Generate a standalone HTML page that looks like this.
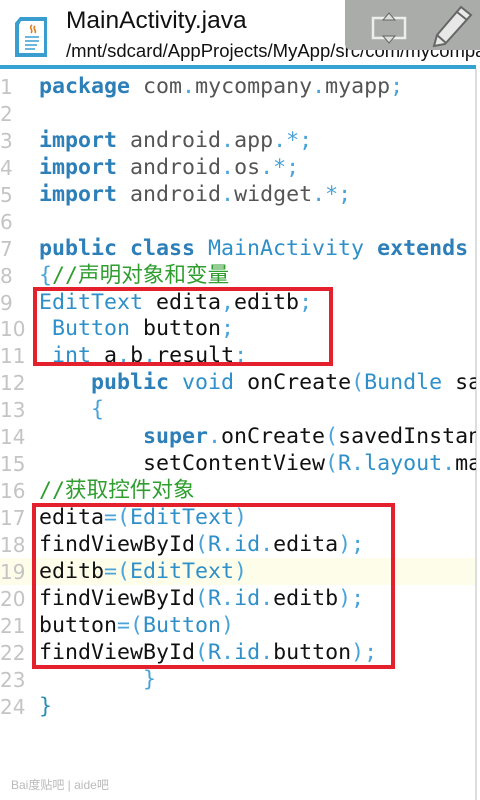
<!DOCTYPE html>
<html><head><meta charset="utf-8"><style>
body{margin:0;width:480px;height:800px;background:#fff;position:relative;overflow:hidden;font-family:"Liberation Sans","Noto Sans CJK SC",sans-serif}
.hdr{position:absolute;left:0;top:0;width:480px;height:66px;background:#fff}
.bar{position:absolute;left:0;top:65px;width:476px;height:4px;background:#35a2d2}
.title{position:absolute;left:66px;top:7px;font-size:24.5px;color:#111}
.path{position:absolute;left:66px;top:40px;width:414px;overflow:hidden;font-size:18.5px;color:#111;white-space:nowrap}
.tb{position:absolute;left:345px;top:0;width:135px;height:50px;background:#a9aca8;border-radius:0 0 0 6px}
.code{position:absolute;left:0;top:74px;width:476px;overflow:hidden;font-family:"DejaVu Sans Mono","Liberation Mono","Noto Sans CJK SC",monospace;font-size:21.6px;line-height:26.95px;white-space:normal}
.ln{display:block;position:relative;height:26.95px;overflow:hidden}
.n{position:absolute;left:0;top:0;width:26px;color:#c4c4c4;font-size:20px;font-family:"DejaVu Sans","Liberation Sans",sans-serif}
.c{position:absolute;left:39px;top:0;color:#111;white-space:pre}
.k{color:#2c7fb8;font-weight:bold}.t{color:#2e8fc9}.p{color:#4aa3d8}.g{color:#555}.cm{color:#2f9e2f;font-family:"DejaVu Sans Mono","Noto Sans CJK SC",monospace}
.box{position:absolute;border:4px solid #e4202c}
</style></head><body>
<div class="hdr"></div>
<svg style="position:absolute;left:13px;top:16px" width="36" height="42" viewBox="0 0 36 42"><path d="M7 1h27v40H2V7z" fill="#3a9dd0"/><path d="M8 5h23v32H6V9z" fill="#fff"/><path d="M19 9c-4 3 2 5-1 8M22 10c-3 3 2 4 0 7" stroke="#e07b20" fill="none" stroke-width="1.6"/><path d="M12 21h14M12 25h14M12 29h12M12 33h10" stroke="#3a9dd0" stroke-width="1.5"/></svg>
<div class="title">MainActivity.java</div>
<div class="path">/mnt/sdcard/AppProjects/MyApp/src/com/mycompany</div>
<div class="tb">
<svg style="position:absolute;left:26px;top:12px" width="36" height="32" viewBox="0 0 36 32"><rect x="2" y="6" width="32" height="20" fill="none" stroke="#eee" stroke-width="2.5"/><path d="M12 8l6-7 6 7zM12 24l6 7 6-7z" fill="#ddd" stroke="#666"/></svg>
<svg style="position:absolute;left:86px;top:4px" width="44" height="44" viewBox="0 0 44 44"><path d="M30 3l10 8L14 40 3 42l3-11z" fill="#e8e8e8" stroke="#666" stroke-width="2"/><path d="M6 31l9 8M26 8l10 8" stroke="#666" stroke-width="2"/></svg>
</div>
<div class="bar"></div>
<div style="position:absolute;left:0;top:558px;width:476px;height:27px;background:#fdfde9"></div>
<div style="position:absolute;left:475px;top:69px;width:2px;height:731px;background:#ddd"></div>
<div class="code"><span class="ln"><span class="n">1</span><span class="c"><span class="k">package</span> <span class="g">com</span><span class="p">.</span><span class="g">mycompany</span><span class="p">.</span><span class="g">myapp</span><span class="p">;</span></span></span><span class="ln"><span class="n">2</span></span><span class="ln"><span class="n">3</span><span class="c"><span class="k">import</span> <span class="g">android</span><span class="p">.</span><span class="g">app</span><span class="p">.*;</span></span></span><span class="ln"><span class="n">4</span><span class="c"><span class="k">import</span> <span class="g">android</span><span class="p">.</span><span class="g">os</span><span class="p">.*;</span></span></span><span class="ln"><span class="n">5</span><span class="c"><span class="k">import</span> <span class="g">android</span><span class="p">.</span><span class="g">widget</span><span class="p">.*;</span></span></span><span class="ln"><span class="n">6</span></span><span class="ln"><span class="n">7</span><span class="c"><span class="k">public class</span> <span class="t">MainActivity</span> <span class="k">extends</span></span></span><span class="ln"><span class="n">8</span><span class="c"><span class="p">{</span><span class="cm">//声明对象和变量</span></span></span><span class="ln"><span class="n">9</span><span class="c"><span class="t">EditText</span> edita<span class="p">,</span>editb<span class="p">;</span></span></span><span class="ln"><span class="n">10</span><span class="c"> <span class="t">Button</span> button<span class="p">;</span></span></span><span class="ln"><span class="n">11</span><span class="c"> <span class="t">int</span> a<span class="p">,</span>b<span class="p">,</span>result<span class="p">;</span></span></span><span class="ln"><span class="n">12</span><span class="c">    <span class="k">public</span> <span class="t">void</span> onCreate<span class="p">(</span><span class="t">Bundle</span> sa</span></span><span class="ln"><span class="n">13</span><span class="c">    <span class="p">{</span></span></span><span class="ln"><span class="n">14</span><span class="c">        <span class="k">super</span><span class="p">.</span>onCreate<span class="p">(</span>savedInstan</span></span><span class="ln"><span class="n">15</span><span class="c">        setContentView<span class="p">(</span><span class="t">R</span><span class="p">.</span><span class="t">layout</span><span class="p">.</span>ma</span></span><span class="ln"><span class="n">16</span><span class="c"><span class="cm">//获取控件对象</span></span></span><span class="ln"><span class="n">17</span><span class="c">edita<span class="p">=(</span><span class="t">EditText</span><span class="p">)</span></span></span><span class="ln"><span class="n">18</span><span class="c">findViewById<span class="p">(</span><span class="t">R</span><span class="p">.</span><span class="t">id</span><span class="p">.</span>edita<span class="p">);</span></span></span><span class="ln"><span class="n">19</span><span class="c">editb<span class="p">=(</span><span class="t">EditText</span><span class="p">)</span></span></span><span class="ln"><span class="n">20</span><span class="c">findViewById<span class="p">(</span><span class="t">R</span><span class="p">.</span><span class="t">id</span><span class="p">.</span>editb<span class="p">);</span></span></span><span class="ln"><span class="n">21</span><span class="c">button<span class="p">=(</span><span class="t">Button</span><span class="p">)</span></span></span><span class="ln"><span class="n">22</span><span class="c">findViewById<span class="p">(</span><span class="t">R</span><span class="p">.</span><span class="t">id</span><span class="p">.</span>button<span class="p">);</span></span></span><span class="ln"><span class="n">23</span><span class="c">        <span class="p">}</span></span></span><span class="ln"><span class="n">24</span><span class="c"><span class="p" style="color:#2a8fb0">}</span></span></span></div>
<div class="box" style="left:33px;top:287px;width:292px;height:71px"></div>
<div class="box" style="left:32px;top:503px;width:355px;height:158px"></div>
<div style="position:absolute;left:11px;top:776px;font-size:12px;color:#bbb">Bai度贴吧 | aide吧</div>
</body></html>
